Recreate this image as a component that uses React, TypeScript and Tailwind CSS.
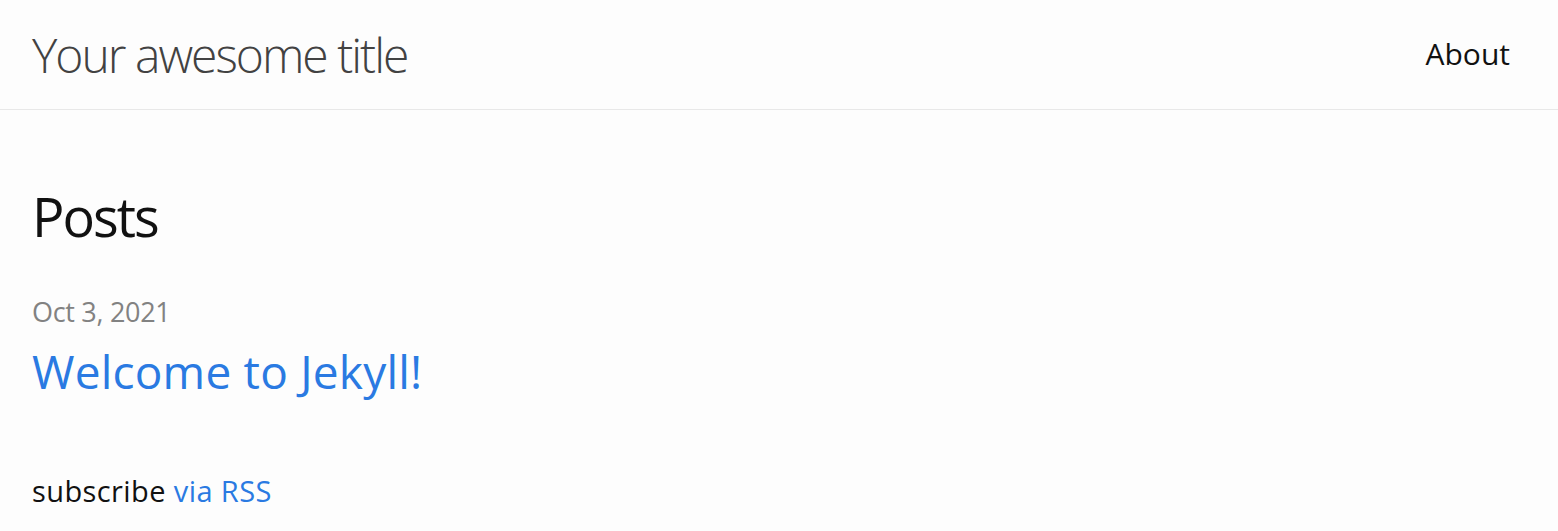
export default function App() {
  return (
    <div className="min-h-[531px] bg-[#fdfdfd] text-[#111111] font-['Open_Sans',sans-serif]">
      <header className="h-[110px] border-b border-[#e8e8e8] flex items-center justify-between px-[32px]">
        <a href="#" className="text-[48px] leading-none font-light text-[#424242] tracking-[-2px]">
          Your awesome title
        </a>
        <nav>
          <a href="#" className="text-[30px] leading-none text-[#111111] mr-[16px]">
            About
          </a>
        </nav>
      </header>
      <main className="px-[32px]">
        <h2 className="mt-[79px] text-[54px] leading-none tracking-[-2px]">Posts</h2>
        <ul>
          <li>
            <div className="mt-[55px] text-[27px] leading-none text-[#828282] tracking-[-0.3px]">
              Oct 3, 2021
            </div>
            <h3 className="mt-[23px] text-[46px] leading-none tracking-[0.2px]">
              <a href="#" className="text-[#2a7ae2]">
                Welcome to Jekyll!
              </a>
            </h3>
          </li>
        </ul>
        <p className="mt-[82px] text-[29px] leading-none tracking-[0.4px]">
          subscribe{" "}
          <a href="#" className="text-[#2a7ae2]">
            via RSS
          </a>
        </p>
      </main>
    </div>
  );
}
